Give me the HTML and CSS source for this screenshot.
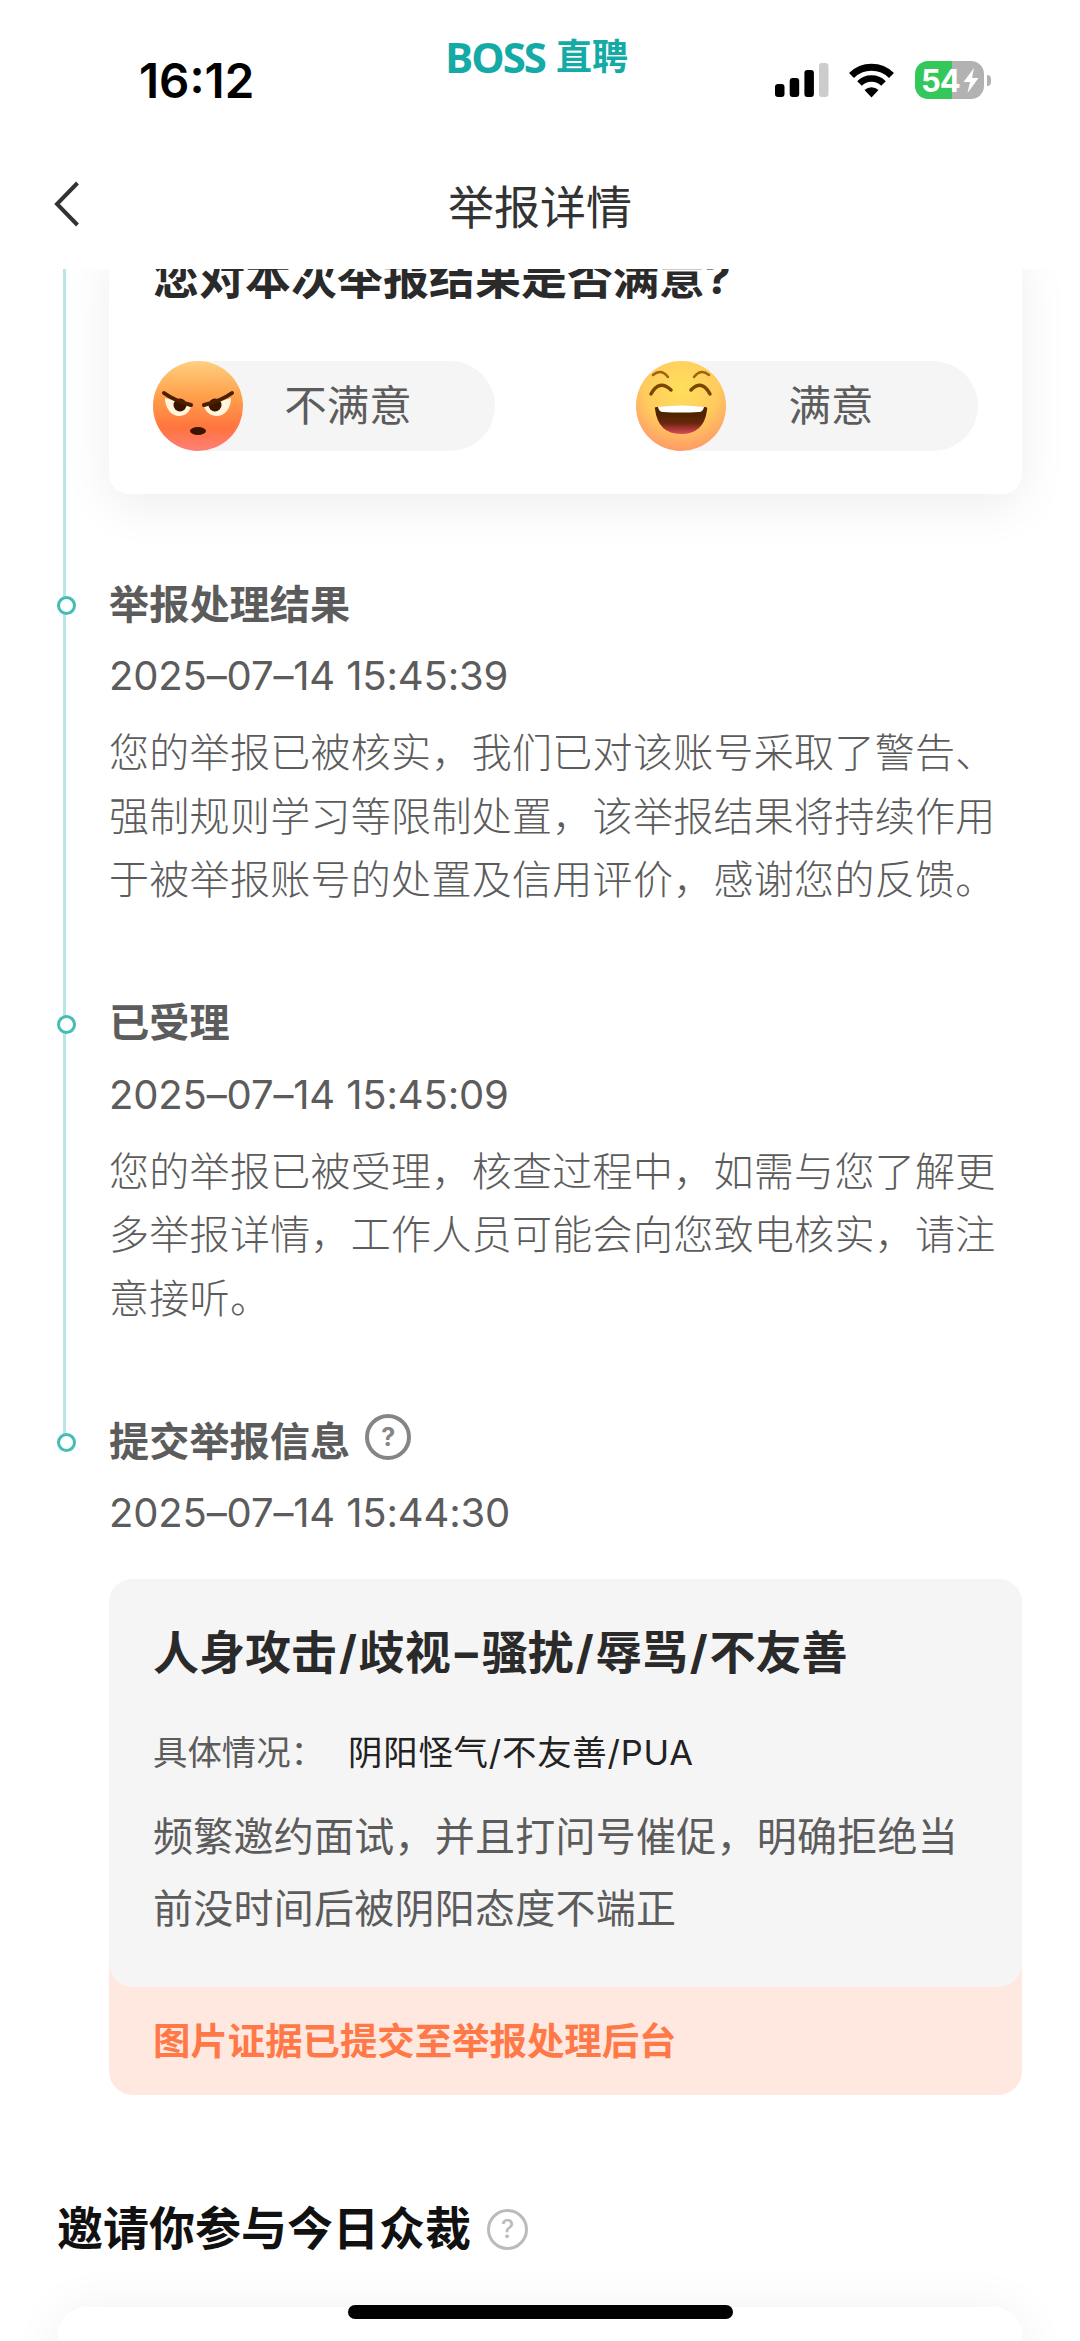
FILE: index.html
```html
<!DOCTYPE html>
<html lang="zh-CN">
<head>
    <meta charset="UTF-8">
    <title>举报详情</title>
    <link rel="stylesheet" href="styles.css">
</head>

<body>

<div id="page">
    <div class="header">
        <div class="status">
            <div class="time">16:12</div>
            <div class="brand"><span class="en">BOSS</span><span class="cn">直聘</span></div>
            <div class="icons">
                <svg class="signal" width="54" height="36" viewBox="0 0 54 36">
                    <rect x="0" y="22" width="9.500" height="13" rx="3"/>
                    <rect x="14.700" y="16" width="9.500" height="19" rx="3"/>
                    <rect x="29.400" y="8" width="9.500" height="27" rx="3"/>
                    <rect x="44" y="1" width="9.500" height="34" rx="3" fill="#ccc"/>
                </svg>
                <svg class="wifi" width="47" height="36" viewBox="0 0 47 36">
                    <path d="M3.500 13.500A28.500 28.500 0 0 1 43.500 13.500" fill="none" stroke="#000" stroke-width="7"/>
                    <path d="M11.500 21.500A17 17 0 0 1 35.500 21.500" fill="none" stroke="#000" stroke-width="6.500"/>
                    <path d="M16.500 28A10.500 10.500 0 0 1 30.500 28L23.500 35.500Z"/>
                </svg>
                <div class="battery">
                    <span>54</span>
                    <svg width="16" height="25" viewBox="0 0 16 25"><path d="M11 0L0.500 14H7L4.500 25L15.500 10H9Z" fill="#fff"/></svg>
                </div>
                <i class="cap"></i>
            </div>
        </div>
        <div class="nav">
            <svg class="back" width="26" height="46" viewBox="0 0 26 46"><path d="M23.500 2L3 23L23.500 44" fill="none" stroke="#333" stroke-width="4"/></svg>
            <h1>举报详情</h1>
        </div>
    </div>

    <div class="content">
        <div class="timeline">
            <div class="card">
                <h2>您对本次举报结果是否满意?</h2>
                <div class="btns">
                    <div class="btn">
                        <svg width="90" height="90" viewBox="0 0 90 90">
                            <defs>
                                <linearGradient id="angry" x1="0" y1="0" x2="0" y2="1">
                                    <stop offset="0" stop-color="#ffcf80"/>
                                    <stop offset="0.400" stop-color="#ff9f4a"/>
                                    <stop offset="0.750" stop-color="#ff743f"/>
                                    <stop offset="1" stop-color="#ff7f78"/>
                                </linearGradient>
                            </defs>
                            <circle cx="45" cy="45" r="45" fill="url(#angry)"/>
                            <path d="M12 37L38 45C37 51 32 55 26 55C18 55 12 47 12 37Z" fill="#fff6dc"/>
                            <path d="M78 37L51 45C52 51 58 55 64 55C72 55 78 47 78 37Z" fill="#fff6dc"/>
                            <circle cx="27" cy="44" r="6.500" fill="#3c1500"/>
                            <circle cx="62" cy="44" r="6.500" fill="#3c1500"/>
                            <path d="M11 32Q22 40 38 44M79 32Q68 40 51 44" fill="none" stroke="#4a2000" stroke-width="4" stroke-linecap="round"/>
                            <ellipse cx="45" cy="70" rx="8" ry="4" fill="#3c1500"/>
                        </svg>
                        <span>不满意</span>
                    </div>
                    <div class="btn">
                        <svg width="90" height="90" viewBox="0 0 90 90">
                            <defs>
                                <radialGradient id="happy" cx="0.500" cy="0.300" r="0.750">
                                    <stop offset="0" stop-color="#ffdf5c"/>
                                    <stop offset="0.550" stop-color="#ffcb5e"/>
                                    <stop offset="1" stop-color="#ff9268"/>
                                </radialGradient>
                                <linearGradient id="mouth" x1="0" y1="0" x2="0" y2="1">
                                    <stop offset="0.300" stop-color="#512400"/>
                                    <stop offset="0.600" stop-color="#6a2610"/>
                                    <stop offset="1" stop-color="#dd4858"/>
                                </linearGradient>
                            </defs>
                            <circle cx="45" cy="45" r="45" fill="url(#happy)"/>
                            <path d="M17 14Q25 7 32 16M58 16Q65 7 73 14" fill="none" stroke="#a06410" stroke-width="2.500" stroke-linecap="round"/>
                            <path d="M15 33Q23 18 35 29M55 29Q66 18 74 33" fill="none" stroke="#7a4600" stroke-width="3.500" stroke-linecap="round"/>
                            <path d="M19 48Q18 46 21 46Q45 48 69 46Q72 46 71 49Q68 73 45 73Q22 73 19 48Z" fill="url(#mouth)"/>
                            <path d="M22 46Q45 43 68 46Q67 51 63 51Q45 52 27 51Q23 51 22 46Z" fill="#fff"/>
                        </svg>
                        <span>满意</span>
                    </div>
                </div>
            </div>

            <div class="item">
                <i class="dot"></i>
                <h3>举报处理结果</h3>
                <div class="date">2025–07–14 15:45:39</div>
                <p>您的举报已被核实，我们已对该账号采取了警告、强制规则学习等限制处置，该举报结果将持续作用于被举报账号的处置及信用评价，感谢您的反馈。</p>
            </div>
            <div class="item">
                <i class="dot"></i>
                <h3>已受理</h3>
                <div class="date">2025–07–14 15:45:09</div>
                <p>您的举报已被受理，核查过程中，如需与您了解更多举报详情，工作人员可能会向您致电核实，请注意接听。</p>
            </div>
            <div class="item last">
                <i class="dot"></i>
                <h3>提交举报信息<span class="help">?</span></h3>
                <div class="date">2025–07–14 15:44:30</div>
            </div>
        </div>

        <div class="report">
            <div class="detail">
                <h2>人身攻击<span>/</span>歧视<span class="dash">–</span>骚扰<span>/</span>辱骂<span>/</span>不友善</h2>
                <div class="row"><span class="label">具体情况：</span><span class="value">阴阳怪气/不友善/PUA</span></div>
                <p>频繁邀约面试，并且打问号催促，明确拒绝当前没时间后被阴阳态度不端正</p>
            </div>
            <div class="proof">图片证据已提交至举报处理后台</div>
        </div>

        <div class="invite">
            <h2>邀请你参与今日众裁</h2>
            <span class="help">?</span>
        </div>
        <div class="vote"></div>
    </div>
    <div class="home"></div>
</div>

</body>
</html>
```

FILE: styles.css
```css
*{
    margin:0;
    padding:0;
    box-sizing: border-box;
}
body{
    background: #fff;
    font-family: Inter, "Noto Sans CJK SC", sans-serif;
    color: #5c5c5c;
}
i{
    display: block;
}
svg{
    display: block;
}
#page{
    width: 1080px;
    height: 2341px;
    position: relative;
    overflow: hidden;
}

/* 顶部 */
.header{
    height: 269px;
    background: #fff;
}
.status{
    height: 146px;
    display: grid;
    grid-template-columns: minmax(0, 1fr) 182px minmax(0, 1fr);
}
.time{
    padding: 52px 0 0 139px;
    font-size: 47.500px;
    line-height: 58px;
    font-weight: 600;
    color: #000;
}
.brand{
    display: flex;
    justify-content: space-between;
    padding-top: 28px;
    margin: 0 3px 0 -4px;
    line-height: 58px;
    color: #14aaa5;
    font-weight: 700;
    white-space: nowrap;
}
.brand .en{
    font-family: "Open Sans", sans-serif;
    font-size: 42px;
    letter-spacing: -2px;
}
.brand .cn{
    font-size: 36px;
}
.icons{
    display: flex;
    align-items: flex-start;
    padding: 62px 0 0 144px;
}
.icons svg, .battery, .cap{
    flex-shrink: 0;
}
.wifi{
    margin-left: 19px;
}
.battery{
    width: 69px;
    height: 38px;
    margin: -1px 0 0 20px;
    padding-left: 6px;
    display: flex;
    align-items: center;
    border-radius: 13px;
    background: linear-gradient(to right, #34c759 37px, #b2b2b2 37px);
    color: #fff;
    font-size: 31px;
    font-weight: 700;
    letter-spacing: -1px;
}
.battery svg{
    margin-left: 3px;
}
.cap{
    width: 4px;
    height: 11px;
    margin: 13px 0 0 3px;
    border-radius: 0 4px 4px 0;
    background: #b2b2b2;
}
.nav{
    height: 123px;
    display: grid;
    grid-template-columns: 1fr auto 1fr;
    align-items: center;
}
.back{
    margin: -7px 0 0 54px;
}
.nav h1{
    font-size: 46px;
    line-height: 60px;
    font-weight: 400;
    color: #333;
    margin-top: -2px;
}

/* 时间轴 */
.content{
    height: 2072px;
    overflow: hidden;
}
.timeline{
    margin: -22px 0 0 63px;
    padding-left: 46px;
    position: relative;
}
.timeline::before{
    content: "";
    position: absolute;
    left: 0;
    top: 0;
    width: 3px;
    height: 1187px;
    background: #b8e6e3;
}
.card{
    width: 913px;
    height: 247px;
    padding: 0 44px;
    border-radius: 0 0 20px 20px;
    box-shadow: 0 12px 50px rgba(0,0,0,.07);
}
.card h2{
    height: 114px;
    line-height: 60px;
    font-size: 46px;
    color: #2a2a2a;
}
.card h2, .detail h2, .invite h2{
    font-weight: 700;
    white-space: nowrap;
}
.btns{
    display: flex;
    justify-content: space-between;
}
.btn{
    width: 342px;
    height: 90px;
    display: flex;
    align-items: center;
    border-radius: 45px;
    background: #f5f5f5;
    font-size: 42.500px;
}
.btn span{
    flex: 1;
    padding: 0 42px 8px 0;
    text-align: center;
}
.item{
    width: 896px;
    height: 418.500px;
    position: relative;
}
.card + .item{
    margin-top: 80px;
}
.item.last{
    height: 168px;
}
.dot{
    position: absolute;
    left: -52px;
    top: 22px;
    width: 19px;
    height: 19px;
    border: 3px solid #42beb7;
    border-radius: 50%;
    background: #fff;
}
.item h3{
    display: flex;
    align-items: center;
    height: 60px;
    padding-bottom: 6px;
    font-size: 40.200px;
    font-weight: 700;
}
.date{
    margin-top: 13px;
    font-size: 40px;
    line-height: 58px;
    letter-spacing: -.15px;
}
.item p{
    margin-top: 16px;
    font-size: 40px;
    line-height: 63.500px;
    letter-spacing: .3px;
    font-weight: 300;
}
.help{
    width: 41px;
    height: 41px;
    border: 3px solid #bbb;
    border-radius: 50%;
    color: #bbb;
    font-size: 25px;
    line-height: 35px;
    font-weight: 500;
    text-align: center;
}
.item .help{
    width: 46px;
    height: 46px;
    margin: -2px 0 0 15px;
    border: 4px solid #858585;
    line-height: 38px;
    font-weight: 700;
    color: #858585;
}

/* 举报内容 */
.report{
    width: 913px;
    margin-left: 109px;
    border-radius: 24px;
    background: #ffe8df;
}
.detail{
    height: 408px;
    padding: 43px 44px 0;
    border-radius: 24px;
    background: #f5f5f5;
}
.detail h2{
    font-size: 46px;
    line-height: 60px;
    color: #2a2a2a;
}
.detail h2 span{
    margin: 0 2px;
}
.detail h2 .dash{
    margin: 0 4px;
}
.row{
    display: flex;
    margin-top: 46px;
    font-size: 34.400px;
    line-height: 50px;
    color: #222;
}
.row .label{
    width: 195px;
    color: #5c5c5c;
}
.row .value{
    letter-spacing: .8px;
}
.detail p{
    margin-top: 23px;
    font-size: 40px;
    letter-spacing: .25px;
    line-height: 72px;
}
.proof{
    height: 108px;
    padding-left: 44px;
    line-height: 110px;
    font-size: 37.400px;
    font-weight: 700;
    color: #ff7847;
}
.invite{
    display: flex;
    align-items: center;
    margin: 102px 0 0 57px;
    height: 62px;
}
.invite h2{
    font-size: 46px;
    line-height: 62px;
    color: #111;
}
.invite .help{
    margin: 2px 0 0 16px;
}
.vote{
    height: 200px;
    margin: 48px 58px 0;
    border-radius: 28px;
    box-shadow: 0 0 50px rgba(0,0,0,.06);
}
.home{
    position: absolute;
    left: 348px;
    top: 2305px;
    width: 385px;
    height: 14px;
    border-radius: 7px;
    background: #000;
}
```
